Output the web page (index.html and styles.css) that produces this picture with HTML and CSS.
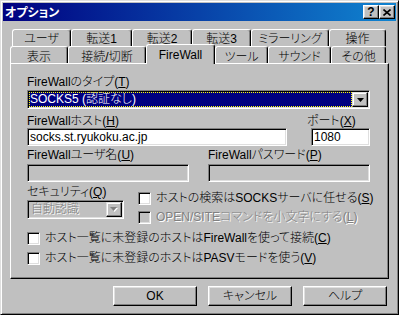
FILE: index.html
```html
<!DOCTYPE html>
<html lang="ja">
<head>
<meta charset="utf-8">
<title>オプション</title>
<link rel="stylesheet" href="styles.css">
</head>
<body>
<div class="window">
  <div class="titlebar">
    <span class="title">オプション</span>
    <div class="tb-buttons">
      <div class="tb-btn help">?</div>
      <div class="tb-btn close">
        <svg width="8" height="7" viewBox="0 0 8 7"><path d="M0.5 0.5L7.5 6.5M7.5 0.5L0.5 6.5" stroke="#000" stroke-width="1.6" fill="none"/></svg>
      </div>
    </div>
  </div>
  <div class="body">
    <div class="tabs">
      <div class="tabrow back">
        <div class="tab w59">ユーザ</div>
        <div class="tab w61">転送1</div>
        <div class="tab w60">転送2</div>
        <div class="tab w59">転送3</div>
        <div class="tab w78">ミラーリング</div>
        <div class="tab w57">操作</div>
      </div>
      <div class="tabrow front">
        <div class="tab w58">表示</div>
        <div class="tab w78">接続/切断</div>
        <div class="tab w69 selected">FireWall</div>
        <div class="tab w53">ツール</div>
        <div class="tab w63">サウンド</div>
        <div class="tab w55">その他</div>
      </div>
    </div>
    <div class="panel">
      <div class="lbl">FireWallのタイプ(<u>T</u>)</div>
      <div class="combo type-combo">
        <div class="combo-value focused"><span>SOCKS5 (認証なし)</span></div>
        <div class="combo-btn">
          <svg width="7" height="4" viewBox="0 0 7 4"><path d="M0 0H7L3.5 4Z" fill="#000"/></svg>
        </div>
      </div>
      <div class="hostrow">
        <div class="host-col">
          <div class="lbl">FireWallホスト(<u>H</u>)</div>
          <div class="edit">socks.st.ryukoku.ac.jp</div>
        </div>
        <div class="port-col">
          <div class="lbl">ポート(<u>X</u>)</div>
          <div class="edit port-edit">1080</div>
        </div>
      </div>
      <div class="userrow">
        <div class="user-col">
          <div class="lbl">FireWallユーザ名(<u>U</u>)</div>
          <div class="edit disabled-edit"></div>
        </div>
        <div class="pass-col">
          <div class="lbl">FireWallパスワード(<u>P</u>)</div>
          <div class="edit disabled-edit"></div>
        </div>
      </div>
      <div class="security">
        <div class="sec-left">
          <div class="lbl">セキュリティ(<u>Q</u>)</div>
          <div class="combo sec-combo">
            <div class="combo-value disabled-value"><span class="dis">自動認識</span></div>
            <div class="combo-btn">
              <svg width="8" height="5" viewBox="0 0 8 5"><path d="M1 1H8L4.5 5Z" fill="#fff"/><path d="M0 0H7L3.5 4Z" fill="#808080"/></svg>
            </div>
          </div>
        </div>
        <div class="sec-right">
          <div class="check">
            <div class="cbox"></div>
            <span>ホストの検索はSOCKSサーバに任せる(<u>S</u>)</span>
          </div>
          <div class="check">
            <div class="cbox cbox-dis"></div>
            <span class="dis">OPEN/SITEコマンドを小文字にする(<u>L</u>)</span>
          </div>
        </div>
      </div>
      <div class="check check-c">
        <div class="cbox"></div>
        <span>ホスト一覧に未登録のホストはFireWallを使って接続(<u>C</u>)</span>
      </div>
      <div class="check check-v">
        <div class="cbox"></div>
        <span>ホスト一覧に未登録のホストはPASVモードを使う(<u>V</u>)</span>
      </div>
    </div>
    <div class="buttons">
      <div class="btn">OK</div>
      <div class="btn">キャンセル</div>
      <div class="btn">ヘルプ</div>
    </div>
  </div>
</div>
</body>
</html>
```

FILE: styles.css
```css
* { box-sizing: border-box; }
html, body { margin: 0; padding: 0; }
body {
  background: #c0c0c0;
  font-family: "Liberation Sans", "Noto Sans CJK JP", sans-serif;
  font-size: 12px;
  font-weight: 300;
  color: #000;
  font-feature-settings: "palt";
}
u { text-decoration: underline; text-underline-offset: 1px; }

.window {
  width: 399px;
  height: 315px;
  border: 1px solid;
  border-color: #dfdfdf #000 #000 #dfdfdf;
  box-shadow: inset 1px 1px #fff, inset -1px -1px #808080;
  padding: 2px;
  background: #c0c0c0;
  display: flex;
  flex-direction: column;
}

.titlebar {
  height: 18px;
  background: linear-gradient(to right, #000080, #1084d0);
  display: flex;
  align-items: center;
  justify-content: space-between;
  padding: 0 1px 0 2px;
}
.title { color: #fff; font-weight: 700; line-height: 18px; font-family: "Noto Sans CJK JP", sans-serif; }
.tb-buttons { display: flex; }
.tb-btn {
  width: 16px;
  height: 14px;
  border: 1px solid;
  border-color: #fff #000 #000 #fff;
  box-shadow: inset -1px -1px #808080, inset 1px 1px #dfdfdf;
  background: #c0c0c0;
  display: flex;
  align-items: center;
  justify-content: center;
}
.help { font-family: "Liberation Sans", sans-serif; font-weight: bold; font-size: 12px; line-height: 12px; }

.body { padding: 8px 0 0 7px; }

.tabs { display: flex; flex-direction: column; }
.tabrow { display: flex; height: 17px; }
.tabrow.back { margin-left: 2px; }
.tab {
  height: 17px;
  border: 1px solid;
  border-bottom: 0;
  border-color: #fff #000 #000 #fff;
  border-radius: 3px 3px 0 0;
  box-shadow: inset -1px 0 #808080;
  background: #c0c0c0;
  text-align: center;
  line-height: 14px;
  padding-top: 2px;
  white-space: nowrap;
}
.tabrow.front .tab { padding-top: 3px; }
.tab.selected {
  height: 20px;
  margin-top: -2px;
  position: relative;
  z-index: 1;
  padding-top: 3px;
}
.w53 { width: 53px; }
.w55 { width: 55px; }
.w57 { width: 57px; }
.w58 { width: 58px; }
.w59 { width: 59px; }
.w60 { width: 60px; }
.w61 { width: 61px; }
.w63 { width: 63px; }
.w69 { width: 69px; }
.w78 { width: 78px; }

.panel {
  width: 379px;
  height: 216px;
  border: 1px solid;
  border-color: #fff #000 #000 #fff;
  box-shadow: inset -1px -1px #808080;
  padding: 11px 0 0 16px;
}

.lbl { height: 14px; line-height: 14px; white-space: nowrap; }

.combo, .edit, .cbox {
  border: 1px solid;
  border-color: #808080 #fff #fff #808080;
  box-shadow: inset 1px 1px #000, inset -1px -1px #dfdfdf;
}
.combo {
  display: flex;
  height: 19px;
  padding: 1px;
  margin-top: 1px;
}
.type-combo { width: 343px; }
.sec-combo { width: 97px; }
.combo-value {
  flex: 1;
  line-height: 15px;
  padding-left: 1px;
  white-space: nowrap;
}
.combo-value.focused {
  background: #000080;
  color: #fff;
  outline: 1px dotted #ffff00;
  outline-offset: -1px;
}
.combo-value.disabled-value { padding-left: 2px; }
.combo-btn {
  width: 16px;
  border: 1px solid;
  border-color: #dfdfdf #000 #000 #dfdfdf;
  box-shadow: inset -1px -1px #808080, inset 1px 1px #fff;
  background: #c0c0c0;
  display: flex;
  align-items: center;
  justify-content: center;
}

.edit {
  height: 18px;
  line-height: 16px;
  padding-left: 2px;
  background: #fff;
  white-space: nowrap;
}
.disabled-edit { background: #c0c0c0; }

.hostrow { display: flex; margin-top: 5px; }
.host-col { width: 260px; }
.port-col { margin-left: 20px; }
.port-edit { width: 59px; margin-left: 4px; }

.userrow { display: flex; margin-top: 2px; }
.user-col { width: 162px; }
.pass-col { width: 162px; margin-left: 19px; }
.userrow .edit { margin-top: 2px; }

.security { display: flex; margin-top: 3px; }
.sec-left { width: 97px; }
.sec-right {
  margin-left: 14px;
  padding-top: 7px;
  display: flex;
  flex-direction: column;
  gap: 6px;
}

.check {
  display: flex;
  align-items: center;
  height: 13px;
  gap: 5px;
  white-space: nowrap;
  line-height: 13px;
}
.cbox { width: 13px; height: 13px; background: #fff; flex: none; }
.cbox-dis { background: #c0c0c0; }
.check-c { margin-top: 8px; }
.check-v { margin-top: 7px; }

.dis { color: #808080; text-shadow: 1px 1px 0 #fff; }

.buttons {
  display: flex;
  justify-content: flex-end;
  gap: 11px;
  margin-top: 7px;
  padding-right: 9px;
}
.btn {
  width: 84px;
  height: 20px;
  border: 1px solid;
  border-color: #fff #000 #000 #fff;
  box-shadow: inset -1px -1px #808080, inset 1px 1px #dfdfdf;
  text-align: center;
  line-height: 18px;
}
```
